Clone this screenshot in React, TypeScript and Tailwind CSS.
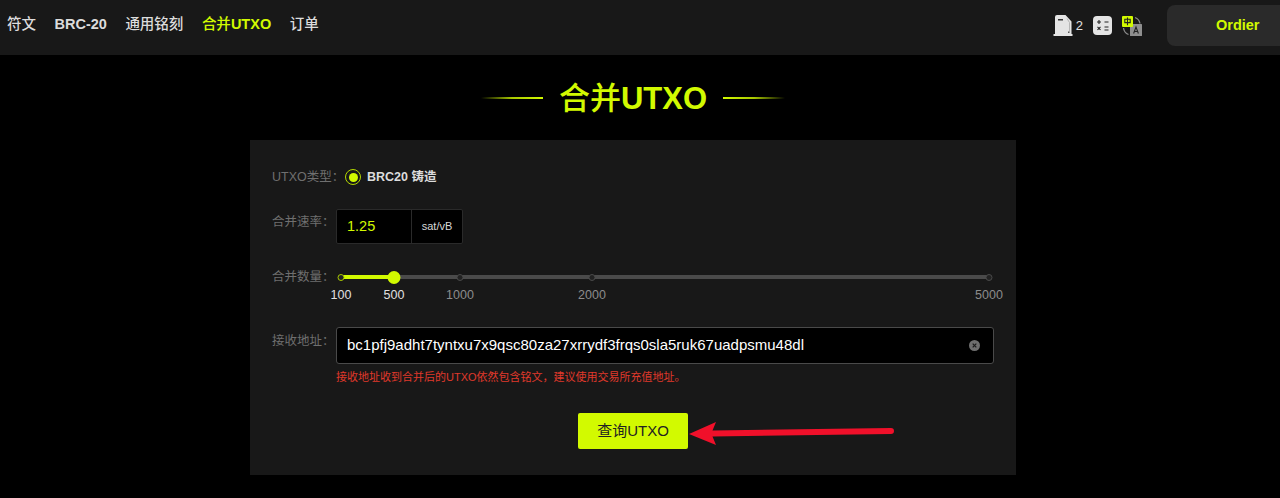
const font = "font-['Liberation_Sans','Noto_Sans_CJK_SC',sans-serif]";

function FuelIcon() {
  return (
    <svg width="20" height="21" viewBox="0 0 20 21" className="block">
      <path d="M2 2 a2 2 0 0 1 2-2 h8.5 l6 6.5 v12.5 h1 v2 h-19 v-2 h1.5z" fill="#e4e4e4" />
      <path d="M14 3.5 l2.5 4 v9" fill="none" stroke="#a8a8a8" strokeWidth="0.8" />
      <rect x="5" y="4" width="5" height="1.5" fill="#333" />
      <rect x="15" y="16.5" width="1.5" height="1.5" fill="#555" />
    </svg>
  );
}

function CalcIcon() {
  return (
    <svg width="19" height="19" viewBox="0 0 19 19" className="block">
      <rect x="0" y="0" width="19" height="19" rx="4" fill="#e4e4e4" />
      <path d="M4 6h4M6 4v4M11.5 6h4M11.5 11h4M11.5 14h4" stroke="#222" strokeWidth="1.1" />
      <path d="M4.5 10.8l3 3M7.5 10.8l-3 3" stroke="#222" strokeWidth="1.1" />
    </svg>
  );
}

function LangIcon() {
  return (
    <svg width="20" height="20" viewBox="0 0 20 20" className="block">
      <path d="M13 1.5 a8 8 0 0 1 5 6 M1.5 12 a8 8 0 0 0 5 6.5" fill="none" stroke="#8a8a8a" strokeWidth="1.3" />
      <rect x="8" y="8" width="12" height="12" rx="0.5" fill="#8f8f8f" />
      <path d="M11.6 17.5 l2.4-6.5 l2.4 6.5 M12.5 15.5h3" fill="none" stroke="#222" strokeWidth="1.1" />
      <rect x="0" y="0" width="11" height="11" rx="1" fill="#d2fa00" />
      <path d="M2.8 3.2h5.4v3.4h-5.4z M5.5 1.6v7.6" fill="none" stroke="#222" strokeWidth="1.1" />
    </svg>
  );
}

function Title() {
  return (
    <div className="ml-[250px] flex h-[85px] w-[766px] items-center justify-center">
      <div className="h-[2px] w-[62px] bg-gradient-to-r from-transparent via-[#a8c800] to-[#d2fa00]" />
      <h1 className="relative top-[1px] mx-[16px] text-[31px] font-bold leading-[40px] text-[#d2fa00]">
        <span className="font-medium">合并</span>UTXO
      </h1>
      <div className="h-[2px] w-[62px] bg-gradient-to-l from-transparent via-[#a8c800] to-[#d2fa00]" />
    </div>
  );
}

const ticks = [
  { label: "100", x: 341, on: true },
  { label: "500", x: 394, on: true },
  { label: "1000", x: 460, on: false },
  { label: "2000", x: 592, on: false },
  { label: "5000", x: 989, on: false },
];

function Slider() {
  return (
    <div className="relative h-[32px] flex-1">
      <div className="absolute left-[5px] top-[5px] h-[4px] w-[648px] rounded-full bg-[#4a4a4a]" />
      <div className="absolute left-[5px] top-[5px] h-[4px] w-[53px] bg-[#d2fa00]" />
      {ticks.map((t) => (
        <div key={t.label}>
          <div
            className={
              t.on
                ? "absolute top-[3.5px] h-[7px] w-[7px] -translate-x-1/2 rounded-full border border-[#a8c800] bg-[#222]"
                : "absolute top-[3.5px] h-[7px] w-[7px] -translate-x-1/2 rounded-full border border-[#4a4a4a] bg-[#222]"
            }
            style={{ left: t.x - 336 }}
          />
          <div
            className={
              t.on
                ? "absolute top-[18px] -translate-x-1/2 text-[12.5px] leading-[14px] text-[#e0e0e0]"
                : "absolute top-[18px] -translate-x-1/2 text-[12.5px] leading-[14px] text-[#8c8c8c]"
            }
            style={{ left: t.x - 336 }}
          >
            {t.label}
          </div>
        </div>
      ))}
      <div className="absolute left-[58px] top-[0.5px] h-[13px] w-[13px] -translate-x-1/2 rounded-full bg-[#d2fa00]" />
    </div>
  );
}

export default function App() {
  return (
    <div className={`${font} relative h-[498px] w-[1280px] overflow-hidden bg-black`}>
      <header className="flex h-[55px] items-start justify-between bg-[#181818]">
        <nav className="flex h-[50px] items-center gap-[18.5px] pl-[7px] text-[14.5px] font-bold text-[#dcdcdc]">
          <span className="font-medium">符文</span>
          <span>BRC-20</span>
          <span className="font-medium">通用铭刻</span>
          <span className="text-[#d2fa00]"><span className="font-medium">合并</span>UTXO</span>
          <span className="font-medium">订单</span>
        </nav>
        <div className="flex items-center pt-[5px]">
          <div className="flex items-center gap-[3px]">
            <FuelIcon />
            <span className="text-[13px] text-[#e0e0e0]">2</span>
          </div>
          <div className="ml-[10px]"><CalcIcon /></div>
          <div className="ml-[10px] mr-[25px]"><LangIcon /></div>
          <div className="flex h-[41px] w-[113px] items-center rounded-l-[8px] bg-[#2a2a2a] pl-[49px] text-[14.5px] font-bold text-[#d2fa00]">
            Ordier
          </div>
        </div>
      </header>
      <Title />
      <main className="ml-[250px] h-[335px] w-[766px] bg-[#181818] px-[22px] text-[12.5px]">
        <div className="flex h-[74px] items-center">
          <span className="w-[73px] shrink-0 text-[#6f6f6f]">UTXO类型：</span>
          <span className="flex h-[16px] w-[16px] items-center justify-center rounded-full border-[1.5px] border-[#b4d800]">
            <span className="h-[9px] w-[9px] rounded-full bg-[#d2fa00]" />
          </span>
          <span className="ml-[6px] font-bold text-[#dcdcdc]">BRC20 铸造</span>
        </div>
        <div className="-mt-[5px] flex items-center">
          <span className="relative -top-[4px] w-[64px] shrink-0 text-[#6f6f6f]">合并速率：</span>
          <div className="flex h-[35px] w-[127px] rounded-[2px] border border-[#2a2a2a] bg-black">
            <div className="flex w-[75px] items-center border-r border-[#2a2a2a] pl-[10px] text-[14.5px] text-[#d2fa00]">1.25</div>
            <div className="flex flex-1 items-center justify-center text-[11px] text-[#d8d8d8]">sat/vB</div>
          </div>
        </div>
        <div className="mt-[26px] flex">
          <span className="w-[64px] shrink-0 leading-[14px] text-[#6f6f6f]">合并数量：</span>
          <Slider />
        </div>
        <div className="mt-[25px] flex">
          <span className="w-[64px] shrink-0 pt-[5px] text-[#6f6f6f]">接收地址：</span>
          <div className="flex-1">
            <div className="flex h-[37px] w-[658px] items-center justify-between rounded-[3px] border border-[#4a4a4a] bg-black pl-[10px] pr-[13px] text-[15px] text-white">
              <span>bc1pfj9adht7tyntxu7x9qsc80za27xrrydf3frqs0sla5ruk67uadpsmu48dl</span>
              <svg width="11" height="11" viewBox="0 0 11 11">
                <circle cx="5.5" cy="5.5" r="5.5" fill="#6e6e6e" />
                <path d="M3.7 3.7l3.6 3.6M7.3 3.7l-3.6 3.6" stroke="#1a1a1a" strokeWidth="1.2" />
              </svg>
            </div>
            <p className="mt-[6px] text-[11px] leading-[14px] text-[#e0392b]">接收地址收到合并后的UTXO依然包含铭文，建议使用交易所充值地址。</p>
          </div>
        </div>
        <div className="mt-[29px] flex justify-center">
          <button className="h-[36px] w-[110px] rounded-[2px] bg-[#d2fa00] text-[15px] text-[#222]">查询UTXO</button>
        </div>
      </main>
      <svg className="absolute left-[680px] top-[415px]" width="220" height="36" viewBox="0 0 220 36">
        <path d="M9 19 L36 7 L32.5 15.5 L211 13 A3 3 0 0 1 211 19 L32.5 21.5 L36 30 Z" fill="#f0102a" />
      </svg>
    </div>
  );
}
